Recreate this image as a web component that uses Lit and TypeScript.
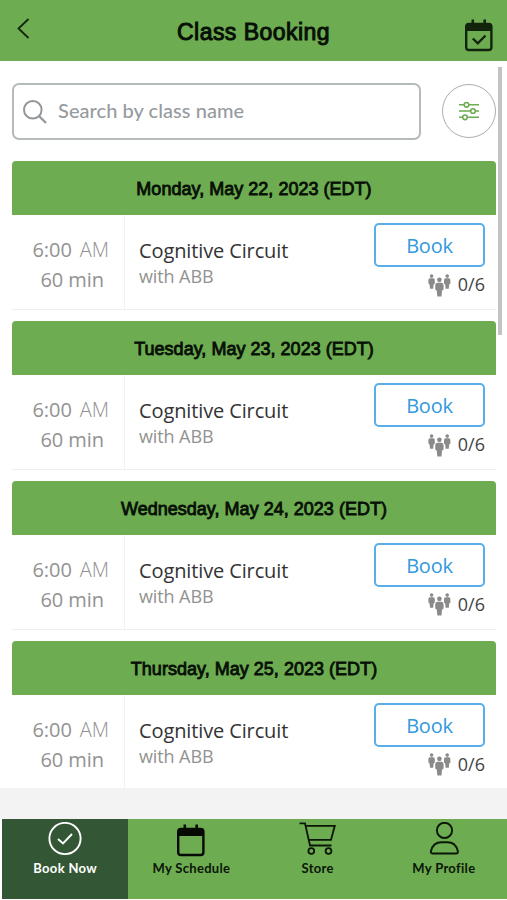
import { LitElement, html, css, svg } from "lit";
import { customElement, property } from "lit/decorators.js";

const days = [
  "Monday, May 22, 2023 (EDT)",
  "Tuesday, May 23, 2023 (EDT)",
  "Wednesday, May 24, 2023 (EDT)",
  "Thursday, May 25, 2023 (EDT)",
];

const person = svg`
  <circle cx="3" cy="1.9" r="1.8" />
  <path d="M1.3 4.1H4.7Q6.2 4.3 6.2 6V9.3L5 10.2L4.6 14.6H1.4L1 10.2L-.2 9.3V6Q-.2 4.3 1.3 4.1Z" />`;

const calendar = (check: boolean) => html`<svg width="30" height="33" viewBox="0 0 30 33" fill="none">
  <path d="M8.8 .5V6M20.7 .5V6" stroke="currentColor" stroke-width="2.6" />
  <rect x="2.2" y="5" width="25.2" height="26" rx="2.8" stroke="currentColor" stroke-width="2.4" />
  <path d="M2 12V6.5Q2 4.2 4.3 4.2H25.3Q27.6 4.2 27.6 6.5V12Z" fill="currentColor" />
  ${check ? svg`<path d="M8.8 19.5L13.8 24.4L21.5 16.5" stroke="currentColor" stroke-width="2.3" />` : ""}
</svg>`;

@customElement("class-day")
export class ClassDay extends LitElement {
  @property() day = "";

  static styles = css`
    :host { display: block; height: 159.8px; color: #929292; font: 20px "Open Sans", sans-serif; }
    .date {
      height: 54px; text-align: center; background: #6eac52; color: #071006;
      border-radius: 4px 4px 0 0; font: 18px/57px "Liberation Sans", sans-serif;
      letter-spacing: 0.02px; -webkit-text-stroke: 0.85px #071006;
    }
    .row { display: flex; height: 94px; border-bottom: 1.5px solid #efefef; white-space: nowrap; }
    .time {
      width: 97px; padding-top: 20px; padding-right: 15px; box-sizing: content-box; text-align: right;
      border-right: 1px solid #f1f1f1; line-height: 30px; letter-spacing: -0.05px;
    }
    .am { font-weight: 300; margin-left: 8px; }
    .length { padding-right: 5px; }
    .info { flex: 1; padding: 22px 0 0 14px; }
    .name { color: #333; line-height: 28px; font-size: 20px; letter-spacing: -0.12px; }
    .coach { font-size: 18px; line-height: 22px; letter-spacing: -0.1px; }
    .side { width: 111px; padding: 8px 11px 0 0; }
    .book {
      box-sizing: border-box; display: block; width: 111px; height: 44px; padding: 0; background: #fff;
      color: #3199dc; border: 2px solid #57aee8; border-radius: 5px; font: 20px/42px "Open Sans", sans-serif;
      letter-spacing: -0.2px;
    }
    .spots { display: flex; justify-content: flex-end; gap: 7px; color: #444; font-size: 18px; line-height: 34px; }
    .people { fill: #8a8a8a; margin-top: 6.5px; }
  `;

  render() {
    return html`
      <div class="date">${this.day}</div>
      <div class="row">
        <div class="time">
          <div>6:00<span class="am">AM</span></div>
          <div class="length">60 min</div>
        </div>
        <div class="info">
          <div class="name">Cognitive Circuit</div>
          <div class="coach">with ABB</div>
        </div>
        <div class="side">
          <button class="book">Book</button>
          <div class="spots">
            <svg class="people" width="23" height="23" viewBox="0 0 23 23">
              <g transform="translate(.6 .2)">${person}</g>
              <g transform="translate(16.2 .2)">${person}</g>
              <g transform="translate(7.5 3.4) scale(1.3)">${person}</g>
            </svg>
            <span>0/6</span>
          </div>
        </div>
      </div>`;
  }
}

@customElement("app-root")
export class AppRoot extends LitElement {
  static styles = css`
    :host { display: flex; flex-direction: column; height: 900px; position: relative; overflow: hidden; background: #fff; }
    * { box-sizing: border-box; }
    svg { display: block; flex: none; }
    .header {
      flex: none; height: 61px; display: grid; grid-template-columns: 60px 1fr 60px; background: #6eac52; color: #13240d;
    }
    .back { margin: 17px 0 0 17px; }
    .title {
      text-align: center; font: 23px/64px "Liberation Sans", sans-serif; color: #071006;
      letter-spacing: 0.45px; -webkit-text-stroke: 1px #071006;
    }
    .booked { margin: 18.5px 0 0 16.5px; }
    .content { flex: none; height: 727px; padding: 22px 11px 0 12px; overflow: hidden; }
    .tools { display: flex; justify-content: space-between; height: 78.4px; }
    .search {
      display: flex; align-items: center; gap: 11px; width: 409px; height: 57px; padding-left: 9px;
      border: 2px solid #b5babd; border-radius: 7px; color: #969b9f; font: 500 20px/50px Lato, sans-serif; letter-spacing: 0.05px;
    }
    .label { padding-bottom: 4px; }
    .filter {
      display: flex; align-items: center; justify-content: center; width: 54px; height: 54px; margin-top: 1px;
      border: 1.5px solid #acacac; border-radius: 50%;
    }
    .thumb { position: absolute; right: 5px; top: 67px; width: 4px; height: 268px; background: #c3c3c3; }
    .gap { flex: none; height: 31px; background: #f3f3f3; }
    .nav { flex: none; display: grid; grid-template-columns: repeat(4, 1fr); height: 80px; margin-left: 2px; background: #6eac52; }
    .tab {
      display: flex; flex-direction: column; align-items: center; color: #0a1606; white-space: nowrap;
      font: 700 13px/18px Lato, sans-serif; letter-spacing: 0.32px;
    }
    .icon { height: 40px; display: flex; align-items: center; }
    .due { padding-top: 2px; color: #050a03; }
    .active { background: #335735; color: #fff; }
  `;

  render() {
    return html`
      <div class="header">
        <svg class="back" width="14" height="23" viewBox="0 0 14 23" fill="none" stroke="currentColor" stroke-width="1.8">
          <path d="M11.5 2L1.5 11.5L11.5 21" />
        </svg>
        <div class="title">Class Booking</div>
        <div class="booked">${calendar(true)}</div>
      </div>
      <div class="content">
        <div class="tools">
          <div class="search">
            <svg width="24" height="24" viewBox="0 0 24 24" fill="none" stroke="#92979b" stroke-width="2">
              <circle cx="9.8" cy="9.8" r="8.8" /><path d="M16.2 16.2L23 23" stroke-width="2.3" />
            </svg>
            <span class="label">Search by class name</span>
          </div>
          <div class="filter">
            <svg width="20" height="20" viewBox="0 0 20 20" fill="#fff" stroke="#6eac52" stroke-width="1.6">
              <path d="M0 3.8H20M0 10H20M0 16.3H20" />
              <circle cx="7.5" cy="3.8" r="2.3" /><circle cx="14" cy="10" r="2.3" /><circle cx="6" cy="16.3" r="2.3" />
            </svg>
          </div>
        </div>
        ${days.map((d) => html`<class-day .day=${d}></class-day>`)}
      </div>
      <div class="thumb"></div>
      <div class="gap"></div>
      <div class="nav">
        <div class="tab active">
          <div class="icon">
            <svg width="34" height="34" viewBox="0 0 34 34" fill="none" stroke="currentColor" stroke-width="1.9">
              <circle cx="17" cy="16.5" r="15.6" /><path d="M10 17L15 21.5L24 12" />
            </svg>
          </div>
          Book Now
        </div>
        <div class="tab"><div class="icon due">${calendar(false)}</div>My Schedule</div>
        <div class="tab">
          <div class="icon">
            <svg width="37" height="34" viewBox="0 0 37 34" fill="none" stroke="currentColor" stroke-width="1.8">
              <path d="M.5 1.3H6L11 23.5H32.5M6.8 3.8H35.8L32 17.8H9.8" />
              <circle cx="12.3" cy="29" r="2.9" /><circle cx="29.5" cy="29" r="2.9" />
            </svg>
          </div>
          Store
        </div>
        <div class="tab">
          <div class="icon">
            <svg width="30" height="34" viewBox="0 0 30 34" fill="none" stroke="currentColor" stroke-width="1.9">
              <circle cx="15.5" cy="8.4" r="7.6" />
              <path d="M3.5 31.5H27Q29.3 31.5 28.8 29C27.3 23 23 20.3 18.5 20.3H12.5C8 20.3 3.5 23 2 29Q1.4 31.5 3.5 31.5Z" />
            </svg>
          </div>
          My Profile
        </div>
      </div>`;
  }
}
